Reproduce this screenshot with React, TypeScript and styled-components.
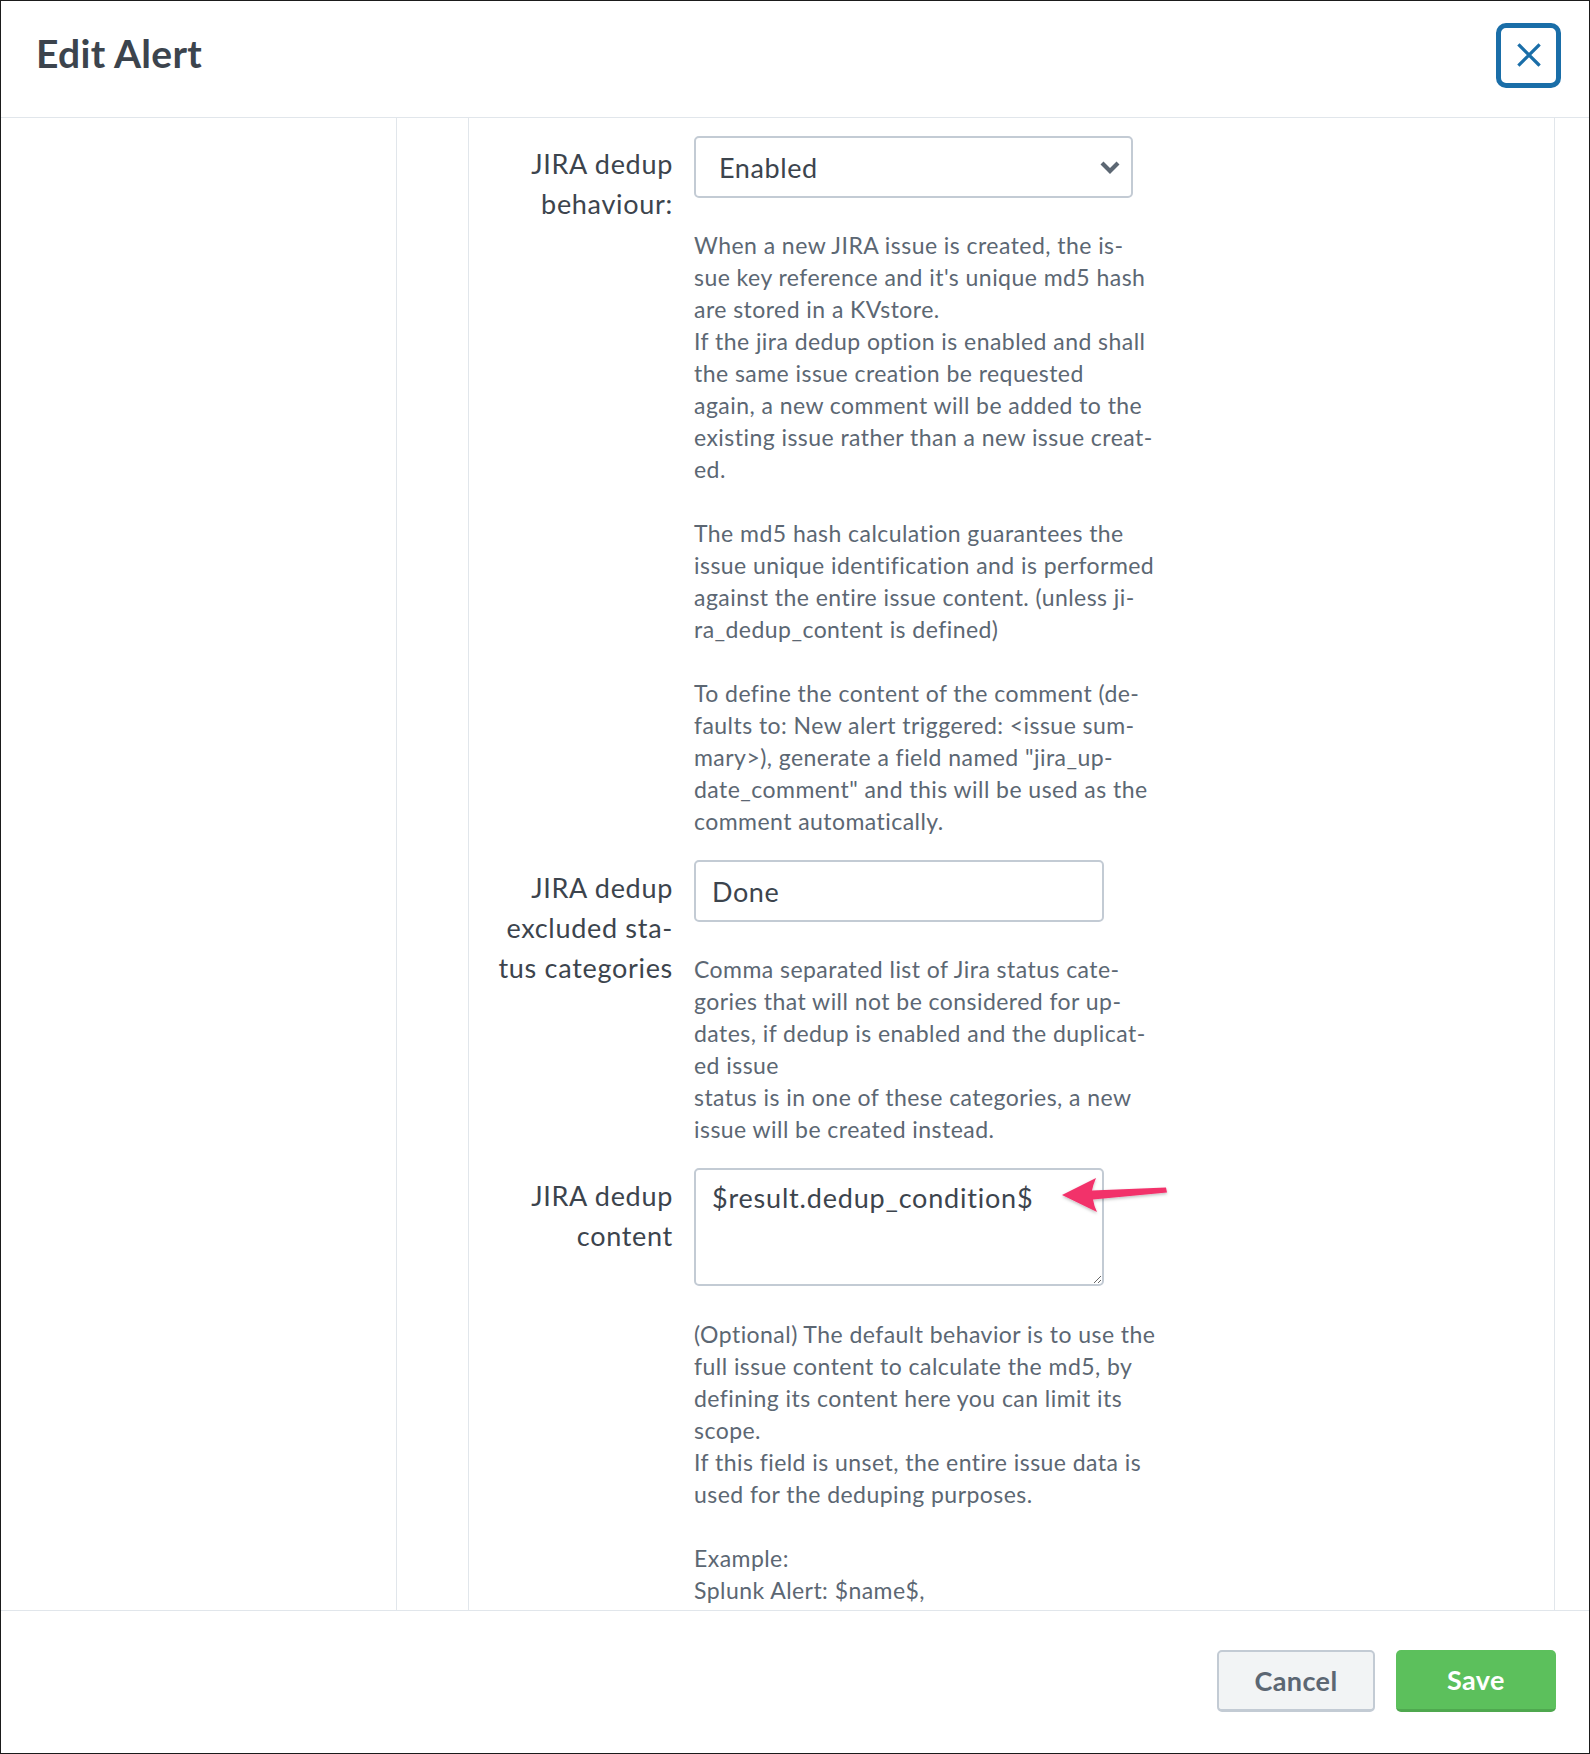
import React from "react";
import styled, { createGlobalStyle } from "styled-components";

const GlobalStyle = createGlobalStyle`
  html, body {
    margin: 0;
    padding: 0;
    background: #ffffff;
  }
  * {
    box-sizing: border-box;
  }
`;

const Dialog = styled.div`
  width: 1590px;
  height: 1754px;
  border: 1px solid #1b1b1b;
  display: flex;
  flex-direction: column;
  font-family: Lato, "Liberation Sans", sans-serif;
  color: #3c444d;
  background: #ffffff;
  overflow: hidden;
`;

const Header = styled.header`
  height: 117px;
  flex: 0 0 117px;
  border-bottom: 1px solid #e1e6eb;
  display: flex;
  align-items: center;
  justify-content: space-between;
  padding: 0 28px 0 35px;
`;

const Title = styled.h1`
  margin: 0 0 12px;
  font-size: 39px;
  font-weight: 700;
  color: #3c444d;
  letter-spacing: 0.3px;
`;

const CloseButton = styled.button`
  width: 65px;
  height: 65px;
  margin-bottom: 8px;
  border: 5px solid #1a6ea8;
  border-radius: 10px;
  background: #ffffff;
  display: flex;
  align-items: center;
  justify-content: center;
  padding: 0;
  cursor: pointer;
`;

const Body = styled.div`
  flex: 1;
  display: flex;
  overflow: hidden;
`;

const Sidebar = styled.aside`
  width: 396px;
  flex: 0 0 396px;
  border-right: 1px solid #e1e6eb;
`;

const Panel = styled.section`
  width: 1087px;
  flex: 0 0 1087px;
  margin-left: 71px;
  border-left: 1px solid #e1e6eb;
  border-right: 1px solid #e1e6eb;
  padding-top: 18px;
  display: flex;
  flex-direction: column;
  gap: 23px;
`;

const Row = styled.div`
  display: grid;
  grid-template-columns: 204px 470px;
  column-gap: 21px;
  align-items: start;
`;

const Label = styled.label`
  padding-top: 8px;
  text-align: right;
  font-size: 27px;
  line-height: 40px;
  letter-spacing: 0.7px;
  color: #3c444d;
  white-space: nowrap;
`;

const Control = styled.div`
  position: relative;
  display: flex;
  flex-direction: column;
`;

const Field = styled.div<{ $width: number }>`
  width: ${(p) => p.$width}px;
  height: 62px;
  border: 2px solid #c3cbd4;
  border-radius: 5px;
  background: #ffffff;
  display: flex;
  align-items: center;
  justify-content: space-between;
  padding: 0 10px 0 16px;
  font-size: 27px;
  letter-spacing: 0.6px;
  color: #3c444d;
`;

const SelectField = styled(Field)`
  padding-left: 23px;
`;

const TextArea = styled.textarea`
  width: 410px;
  height: 118px;
  border: 2px solid #c3cbd4;
  border-radius: 5px;
  padding: 11px 16px;
  font-family: Lato, "Liberation Sans", sans-serif;
  font-size: 27px;
  letter-spacing: 0.8px;
  line-height: 34px;
  color: #3c444d;
  resize: vertical;
  outline: none;
  display: block;
`;

const Help = styled.p<{ $gap: number }>`
  margin: ${(p) => p.$gap}px 0 0;
  font-size: 23px;
  line-height: 32px;
  letter-spacing: 0.45px;
  color: #5c6773;
  white-space: nowrap;
`;

const Arrow = styled.svg`
  position: absolute;
  left: 366px;
  top: 6px;
  width: 110px;
  height: 44px;
  overflow: visible;
`;

const Footer = styled.footer`
  height: 143px;
  flex: 0 0 143px;
  border-top: 1px solid #e1e6eb;
  display: flex;
  align-items: center;
  justify-content: flex-end;
  gap: 21px;
  padding: 0 33px 2px 0;
`;

const Button = styled.button<{ $primary?: boolean }>`
  width: ${(p) => (p.$primary ? 160 : 158)}px;
  height: 62px;
  border-radius: 5px;
  font-family: Lato, "Liberation Sans", sans-serif;
  font-size: 27px;
  font-weight: 700;
  letter-spacing: 0.4px;
  cursor: pointer;
  color: ${(p) => (p.$primary ? "#ffffff" : "#5c6773")};
  background: ${(p) => (p.$primary ? "#5cc05c" : "#f2f4f5")};
  border: ${(p) => (p.$primary ? "none" : "2px solid #c3cbd4")};
  border-bottom: ${(p) => (p.$primary ? "3px solid #4fa84f" : "3px solid #c3cbd4")};
`;

type Para = string[];

const Lines = ({ paras }: { paras: Para[] }) => (
  <>
    {paras.map((lines, i) => (
      <React.Fragment key={i}>
        {i > 0 && (
          <>
            <br />
            <br />
          </>
        )}
        {lines.map((l, j) => (
          <React.Fragment key={j}>
            {j > 0 && <br />}
            {l}
          </React.Fragment>
        ))}
      </React.Fragment>
    ))}
  </>
);

const behaviourHelp: Para[] = [
  [
    "When a new JIRA issue is created, the is-",
    "sue key reference and it's unique md5 hash",
    "are stored in a KVstore.",
    "If the jira dedup option is enabled and shall",
    "the same issue creation be requested",
    "again, a new comment will be added to the",
    "existing issue rather than a new issue creat-",
    "ed.",
  ],
  [
    "The md5 hash calculation guarantees the",
    "issue unique identification and is performed",
    "against the entire issue content. (unless ji-",
    "ra_dedup_content is defined)",
  ],
  [
    "To define the content of the comment (de-",
    "faults to: New alert triggered: <issue sum-",
    'mary>), generate a field named "jira_up-',
    'date_comment" and this will be used as the',
    "comment automatically.",
  ],
];

const excludedHelp: Para[] = [
  [
    "Comma separated list of Jira status cate-",
    "gories that will not be considered for up-",
    "dates, if dedup is enabled and the duplicat-",
    "ed issue",
    "status is in one of these categories, a new",
    "issue will be created instead.",
  ],
];

const contentHelp: Para[] = [
  [
    "(Optional) The default behavior is to use the",
    "full issue content to calculate the md5, by",
    "defining its content here you can limit its",
    "scope.",
    "If this field is unset, the entire issue data is",
    "used for the deduping purposes.",
  ],
  ["Example:", "Splunk Alert: $name$,"],
];

export default function App() {
  return (
    <>
      <GlobalStyle />
      <Dialog>
        <Header>
          <Title>Edit Alert</Title>
          <CloseButton aria-label="Close">
            <svg width="24" height="24" viewBox="0 0 24 24">
              <path d="M2.5 2.5 L21.5 21.5 M21.5 2.5 L2.5 21.5" stroke="#1a6ea8" strokeWidth="3.2" strokeLinecap="square" />
            </svg>
          </CloseButton>
        </Header>
        <Body>
          <Sidebar />
          <Panel>
            <Row>
              <Label>
                JIRA dedup
                <br />
                behaviour:
              </Label>
              <Control>
                <SelectField $width={439}>
                  <span>Enabled</span>
                  <svg width="22" height="14" viewBox="0 0 22 14">
                    <path d="M3 3 L11 11 L19 3" fill="none" stroke="#5c6773" strokeWidth="4.2" strokeLinejoin="miter" />
                  </svg>
                </SelectField>
                <Help $gap={31}>
                  <Lines paras={behaviourHelp} />
                </Help>
              </Control>
            </Row>
            <Row>
              <Label>
                JIRA dedup
                <br />
                excluded sta-
                <br />
                tus categories
              </Label>
              <Control>
                <Field $width={410}>
                  <span>Done</span>
                </Field>
                <Help $gap={31}>
                  <Lines paras={excludedHelp} />
                </Help>
              </Control>
            </Row>
            <Row>
              <Label>
                JIRA dedup
                <br />
                content
              </Label>
              <Control>
                <TextArea defaultValue="$result.dedup_condition$" />
                <Arrow viewBox="0 0 110 44">
                  <defs>
                    <filter id="arrowShadow" x="-20%" y="-30%" width="140%" height="160%">
                      <feDropShadow dx="0" dy="1.5" stdDeviation="1.5" floodColor="#000" floodOpacity="0.25" />
                    </filter>
                  </defs>
                  <path
                    d="M2 21 L36 4 Q33 11 32 16.5 L106 13.5 L107 18.5 L33 25.5 Q34 32 37 38 Z"
                    fill="#f2306b"
                    filter="url(#arrowShadow)"
                  />
                </Arrow>
                <Help $gap={32}>
                  <Lines paras={contentHelp} />
                </Help>
              </Control>
            </Row>
          </Panel>
        </Body>
        <Footer>
          <Button>Cancel</Button>
          <Button $primary>Save</Button>
        </Footer>
      </Dialog>
    </>
  );
}
